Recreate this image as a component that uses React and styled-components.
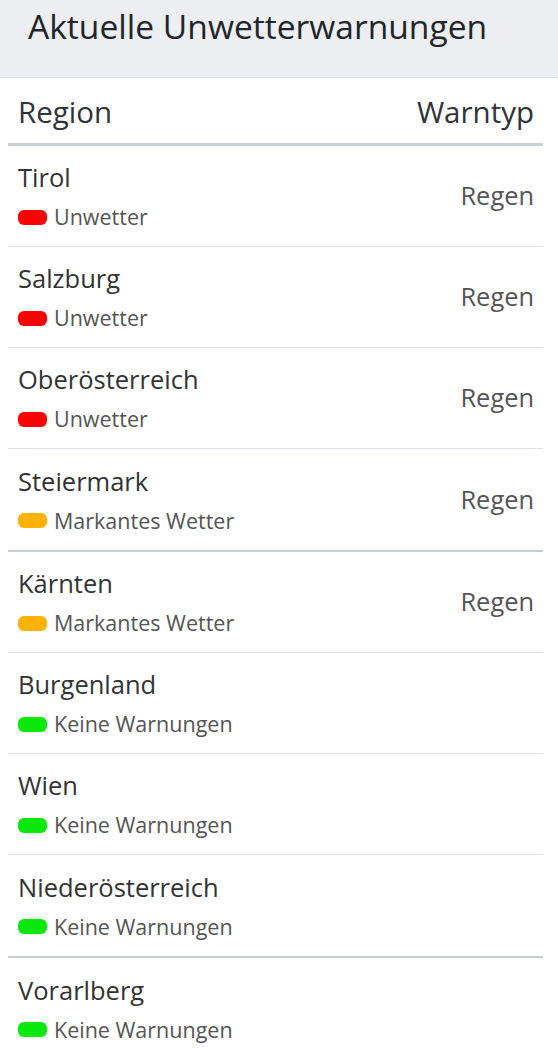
import React from 'react';
import styled, { createGlobalStyle } from 'styled-components';

const GlobalStyle = createGlobalStyle`
  body {
    margin: 0;
    background: #fff;
    font-family: "Open Sans", "Noto Sans", sans-serif;
  }
`;

const levels = {
    severe: { color: '#ff0000', label: 'Unwetter' },
    marked: { color: '#ffb200', label: 'Markantes Wetter' },
    none: { color: '#0be80b', label: 'Keine Warnungen' },
};

const regions = [
    { name: 'Tirol', level: 'severe', type: 'Regen' },
    { name: 'Salzburg', level: 'severe', type: 'Regen' },
    { name: 'Oberösterreich', level: 'severe', type: 'Regen' },
    { name: 'Steiermark', level: 'marked', type: 'Regen', strong: true },
    { name: 'Kärnten', level: 'marked', type: 'Regen' },
    { name: 'Burgenland', level: 'none' },
    { name: 'Wien', level: 'none' },
    { name: 'Niederösterreich', level: 'none', strong: true },
    { name: 'Vorarlberg', level: 'none', last: true },
];

const Page = styled.div`
  width: 558px;
`;

const TitleBar = styled.header`
  height: 78px;
  box-sizing: border-box;
  background: #eceef1;
  border-bottom: 1px solid #dadde2;
  padding: 7px 0 0 28px;
`;

const Title = styled.h1`
  margin: 0;
  font-size: 33.6px;
  font-weight: 400;
  line-height: 38px;
  color: #212529;
`;

const Table = styled.div`
  margin: 0 15px 0 8px;
`;

const HeadRow = styled.div`
  height: 68px;
  box-sizing: border-box;
  display: flex;
  justify-content: space-between;
  align-items: flex-end;
  padding: 0 9px 13px 10px;
  border-bottom: 3px solid #cbcfd4;
`;

const HeadCell = styled.span`
  font-size: 29.5px;
  line-height: 36px;
  color: #2f3338;
`;

const Row = styled.div`
  height: ${p => (p.$strong ? 103 : 101)}px;
  box-sizing: border-box;
  display: grid;
  grid-template-columns: 1fr auto;
  align-items: center;
  padding: 0 9px 0 10px;
  border-bottom: ${p => (p.$last ? 'none' : p.$strong ? '2px solid #c9cdd2' : '1px solid #dee2e6')};
`;

const Cell = styled.div`
  display: flex;
  flex-direction: column;
  gap: 10px;
`;

const Name = styled.span`
  font-size: 25.5px;
  line-height: 32px;
  color: #333;
`;

const Status = styled.span`
  display: flex;
  align-items: center;
  gap: 7px;
  font-size: 21.5px;
  line-height: 28px;
  color: #555;
`;

const Pill = styled.span`
  width: 29px;
  height: 15px;
  border-radius: 6px;
  background: ${p => p.$color};
`;

const Type = styled.span`
  font-size: 25.4px;
  color: #555;
  padding-bottom: 2px;
`;

export default function App() {
    return (
        <Page>
            <GlobalStyle />
            <TitleBar>
                <Title>Aktuelle Unwetterwarnungen</Title>
            </TitleBar>
            <Table>
                <HeadRow>
                    <HeadCell>Region</HeadCell>
                    <HeadCell>Warntyp</HeadCell>
                </HeadRow>
                {regions.map(r => (
                    <Row key={r.name} $strong={r.strong} $last={r.last}>
                        <Cell>
                            <Name>{r.name}</Name>
                            <Status>
                                <Pill $color={levels[r.level].color} />
                                {levels[r.level].label}
                            </Status>
                        </Cell>
                        <Type>{r.type}</Type>
                    </Row>
                ))}
            </Table>
        </Page>
    );
}
